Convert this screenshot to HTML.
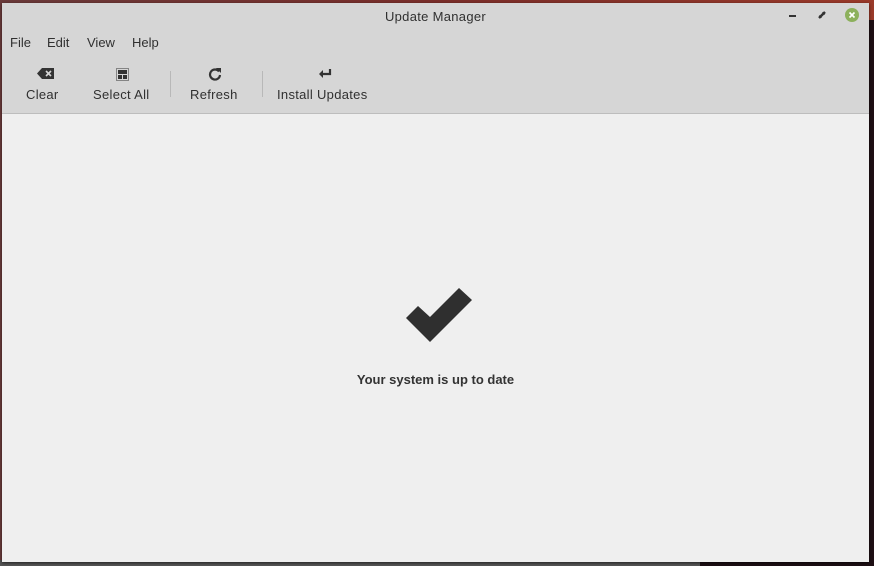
<!DOCTYPE html>
<html><head><style>
html,body{margin:0;padding:0}
body{width:874px;height:566px;position:relative;overflow:hidden;background:linear-gradient(90deg,#6a3a3a,#7a2e2a 50%,#9a3a2a);font-family:"Liberation Sans","DejaVu Sans",sans-serif;color:#333}
.bot{position:absolute;left:0;top:560px;width:874px;height:6px;background:#555}
.bot2{position:absolute;left:700px;top:560px;width:174px;height:6px;background:#1e0f14}
.right{position:absolute;left:868px;top:20px;width:6px;height:546px;background:#1e0f14}
.win{position:absolute;left:2px;top:3px;width:867px;height:559px;background:#efefef;box-shadow:0 1px 3px rgba(0,0,0,.6)}
.head{position:absolute;left:0;top:0;width:867px;height:110px;background:#d6d6d6;border-bottom:1px solid #bdbdbd}
.title{position:absolute;top:6px;width:100%;text-align:center;font-size:13px;color:#303030;letter-spacing:.3px}
.menu{position:absolute;top:32px;font-size:13px;color:#303030}
.tb{position:absolute;top:84px;font-size:13px;color:#303030;letter-spacing:.3px}
.sep{position:absolute;top:68px;width:1px;height:26px;background:#b8b8b8}
.msg{position:absolute;top:369px;width:100%;text-align:center;font-size:13px;font-weight:bold;color:#333}
</style></head><body>
<div class="right"></div><div class="bot"></div><div class="bot2"></div>
<div class="win">
<div class="head">
<div class="title">Update Manager</div>
<div style="position:absolute;left:787px;top:12px;width:7px;height:2px;background:#333"></div>
<svg style="position:absolute;left:816px;top:8px" width="8" height="8"><path d="M1 7L7 1" stroke="#333" stroke-width="2.5"/><path d="M4 1h3v3M1 4v3h3" fill="#333"/></svg>
<div style="position:absolute;left:843px;top:5px;width:14px;height:14px;border-radius:50%;background:#8cb05c"></div>
<svg style="position:absolute;left:843px;top:5px" width="14" height="14"><path d="M4.5 4.5l5 5M9.5 4.5l-5 5" stroke="#fff" stroke-width="1.6"/></svg>
<div class="menu" style="left:8px">File</div>
<div class="menu" style="left:45px">Edit</div>
<div class="menu" style="left:85px">View</div>
<div class="menu" style="left:130px">Help</div>
<svg style="position:absolute;left:35px;top:65px" width="17" height="11"><path d="M5 0H17V11H5L0 5.5Z" fill="#333"/><path d="M9 3l5 5M14 3l-5 5" stroke="#d6d6d6" stroke-width="1.6"/></svg>
<svg style="position:absolute;left:114px;top:65px" width="13" height="13"><rect x=".5" y=".5" width="12" height="12" fill="none" stroke="#333" stroke-dasharray="1 1"/><rect x="2" y="2" width="9" height="4" fill="#333"/><rect x="2" y="7" width="4" height="4" fill="#333"/><rect x="7" y="7" width="4" height="4" fill="#333"/></svg>
<svg style="position:absolute;left:206px;top:64px" width="14" height="14"><path d="M11 4.5A5 5 0 1 0 12 8" fill="none" stroke="#333" stroke-width="2.2"/><path d="M8 1h5v5z" fill="#333"/></svg>
<svg style="position:absolute;left:317px;top:66px" width="14" height="11"><path d="M11 0v5H3" fill="none" stroke="#333" stroke-width="2.2"/><path d="M0 5l4-4v8z" fill="#333"/></svg>
<div class="tb" style="left:24px">Clear</div>
<div class="tb" style="left:91px">Select All</div>
<div class="sep" style="left:168px"></div>
<div class="tb" style="left:188px">Refresh</div>
<div class="sep" style="left:260px"></div>
<div class="tb" style="left:275px">Install Updates</div>
</div>
<svg style="position:absolute;left:0;top:0" width="867" height="559"><path d="M404 315L416 303L428 314L457 285L470 297L428 339Z" fill="#2f2f2f"/></svg>
<div class="msg">Your system is up to date</div>
</div>
</body></html>
